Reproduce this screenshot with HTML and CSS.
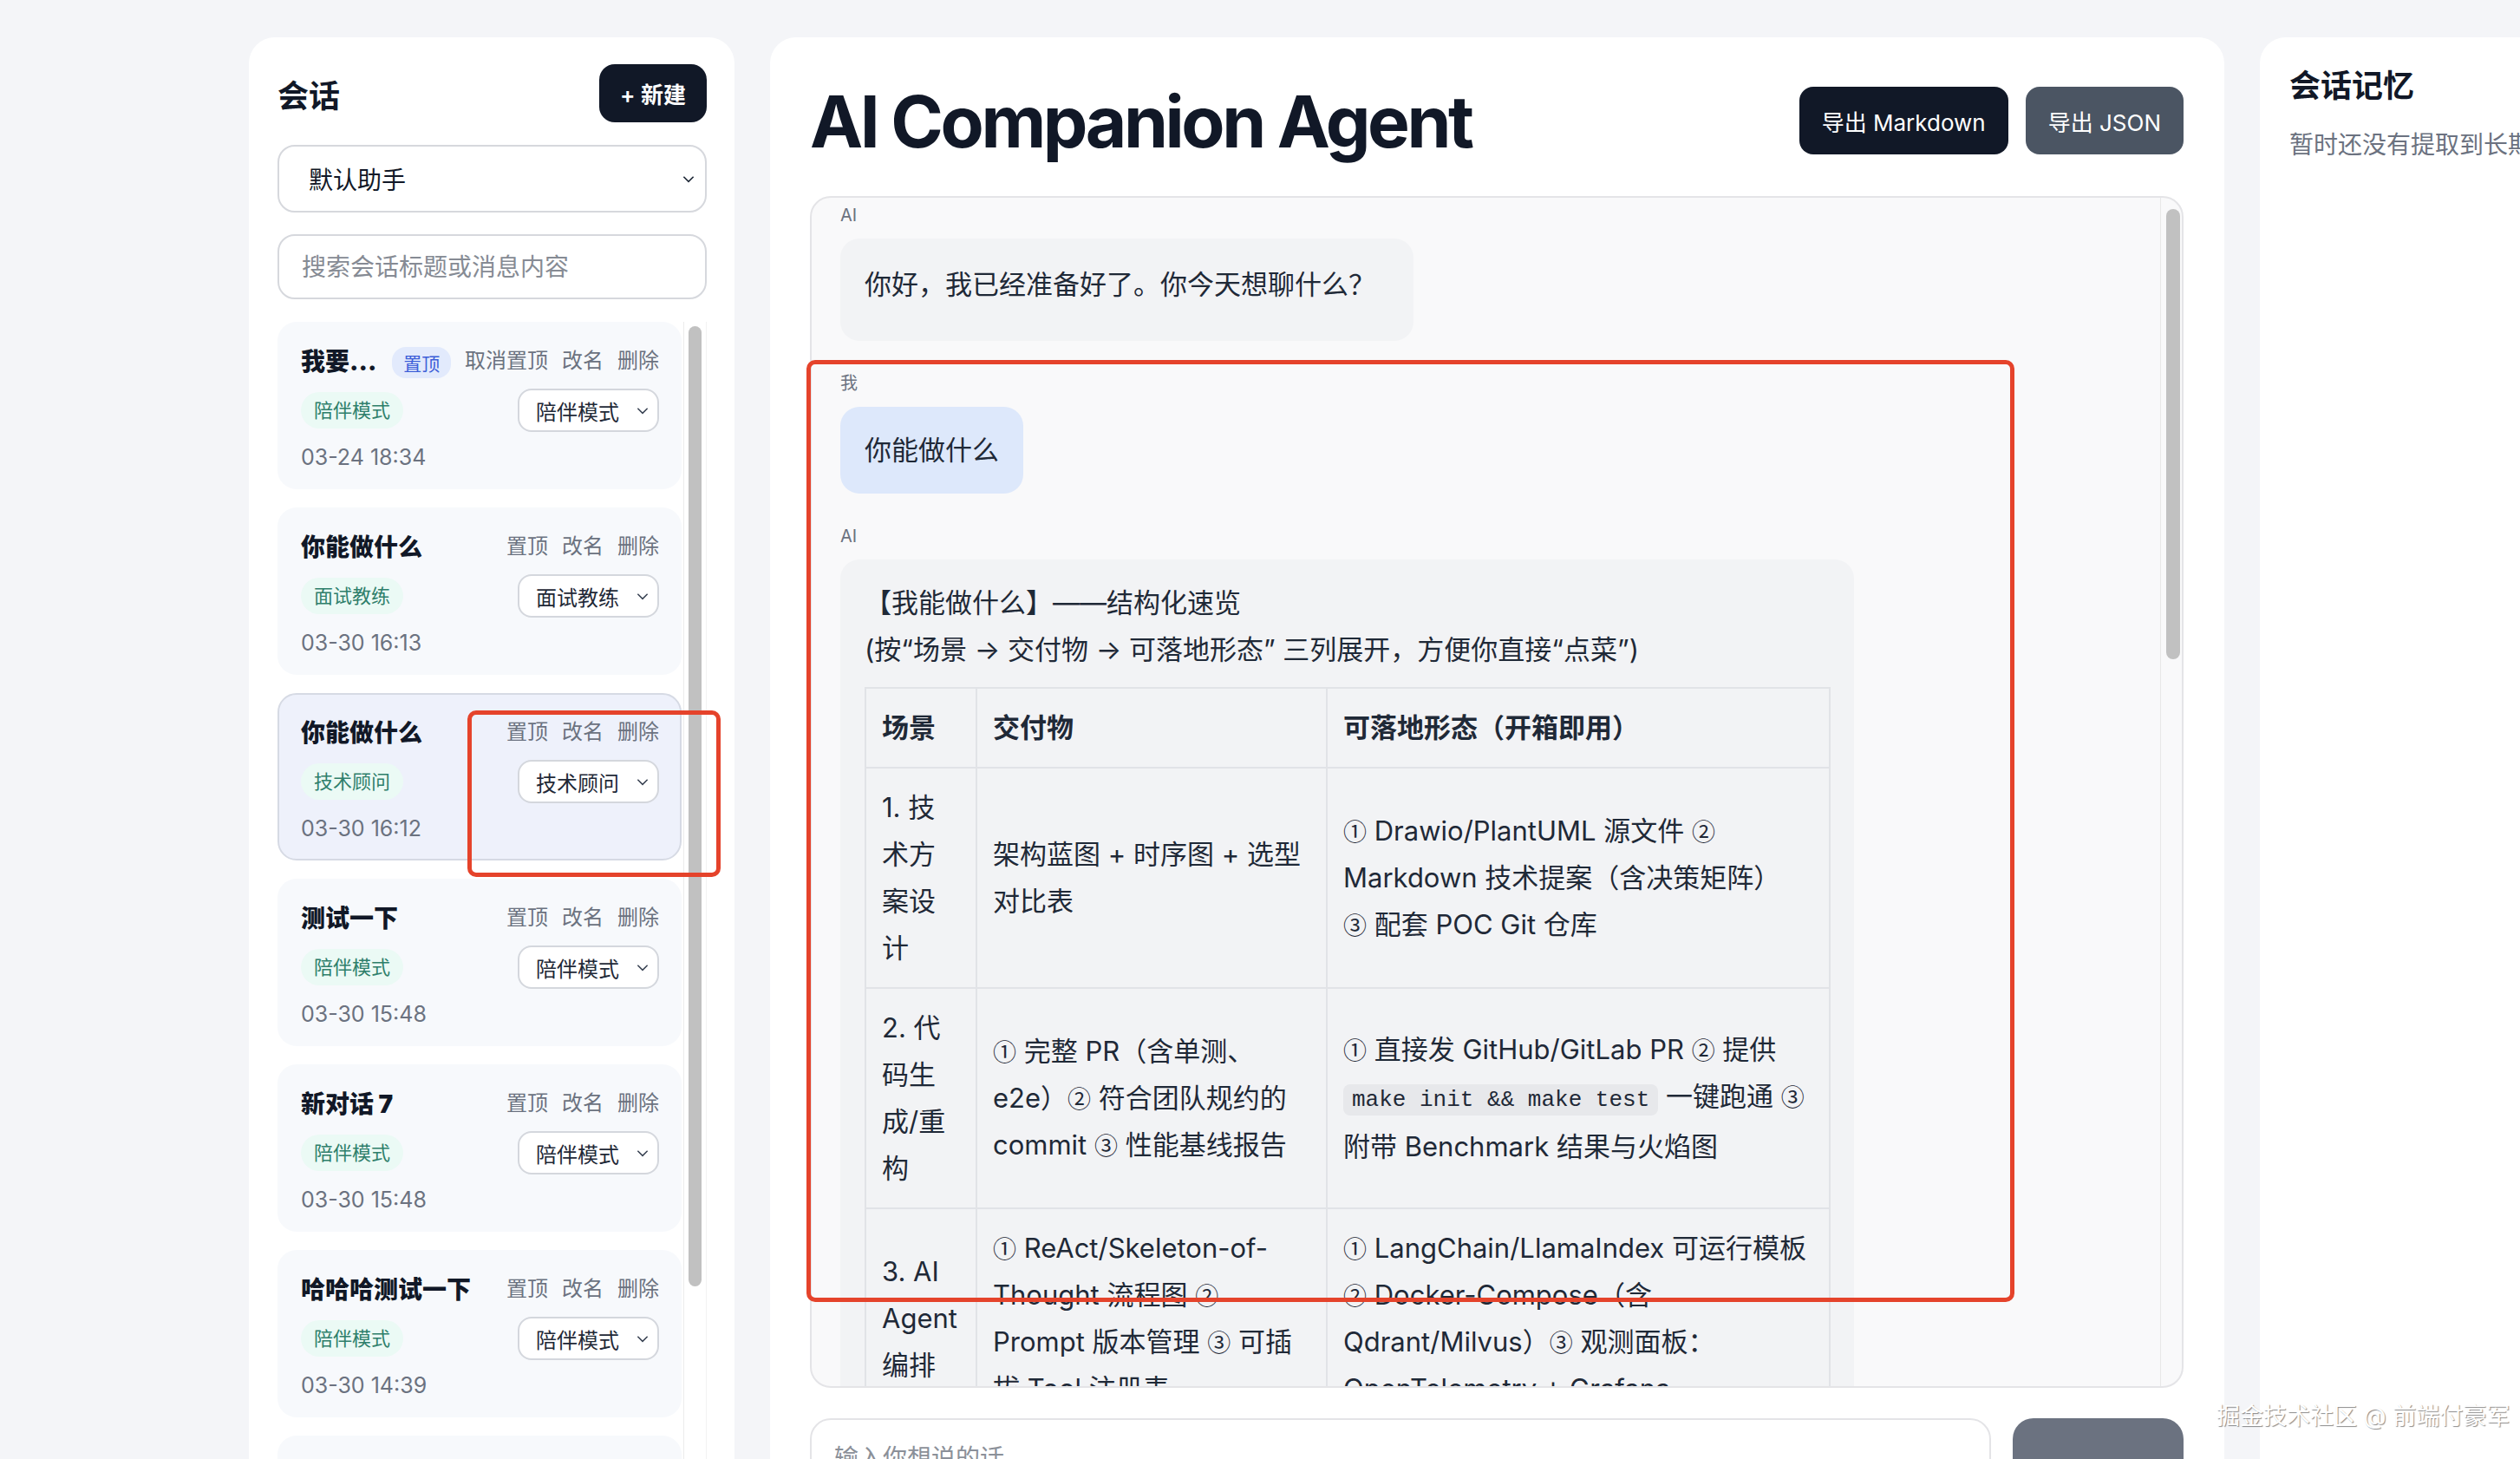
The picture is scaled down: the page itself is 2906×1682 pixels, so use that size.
FILE: index.html
```html
<!doctype html>
<html lang="zh-CN">
<head>
<meta charset="utf-8">
<title>AI Companion Agent</title>
<link rel="stylesheet" href="styles.css">
</head>
<body>
<div class="app">
  <aside class="panel sessions">
    <div class="sessions-head">
      <h2>会话</h2>
      <button class="btn-new">+ 新建</button>
    </div>
    <div class="field field-select">
      <span>默认助手</span>
      <svg class="chev" viewBox="0 0 16 16" width="18" height="18"><path d="M3 6l5 5 5-5" fill="none" stroke="#1f2937" stroke-width="1.5"/></svg>
    </div>
    <input class="search" placeholder="搜索会话标题或消息内容">
    <div class="session-scroll">
      <div class="session-list">
        <div class="session">
          <div class="session-top">
            <div class="session-title"><strong>我要...</strong><span class="pin">置顶</span></div>
            <div class="session-actions"><span>取消置顶</span><span>改名</span><span>删除</span></div>
          </div>
          <div class="session-mid">
            <span class="mode-tag">陪伴模式</span>
            <div class="mode-select"><span>陪伴模式</span><svg viewBox="0 0 16 16" width="18" height="18"><path d="M3 6l5 5 5-5" fill="none" stroke="#374151" stroke-width="1.3"/></svg></div>
          </div>
          <div class="session-time">03-24 18:34</div>
        </div>
        <div class="session">
          <div class="session-top">
            <div class="session-title"><strong>你能做什么</strong></div>
            <div class="session-actions"><span>置顶</span><span>改名</span><span>删除</span></div>
          </div>
          <div class="session-mid">
            <span class="mode-tag">面试教练</span>
            <div class="mode-select"><span>面试教练</span><svg viewBox="0 0 16 16" width="18" height="18"><path d="M3 6l5 5 5-5" fill="none" stroke="#374151" stroke-width="1.3"/></svg></div>
          </div>
          <div class="session-time">03-30 16:13</div>
        </div>
        <div class="session active">
          <div class="session-top">
            <div class="session-title"><strong>你能做什么</strong></div>
            <div class="session-actions"><span>置顶</span><span>改名</span><span>删除</span></div>
          </div>
          <div class="session-mid">
            <span class="mode-tag">技术顾问</span>
            <div class="mode-select"><span>技术顾问</span><svg viewBox="0 0 16 16" width="18" height="18"><path d="M3 6l5 5 5-5" fill="none" stroke="#374151" stroke-width="1.3"/></svg></div>
          </div>
          <div class="session-time">03-30 16:12</div>
        </div>
        <div class="session">
          <div class="session-top">
            <div class="session-title"><strong>测试一下</strong></div>
            <div class="session-actions"><span>置顶</span><span>改名</span><span>删除</span></div>
          </div>
          <div class="session-mid">
            <span class="mode-tag">陪伴模式</span>
            <div class="mode-select"><span>陪伴模式</span><svg viewBox="0 0 16 16" width="18" height="18"><path d="M3 6l5 5 5-5" fill="none" stroke="#374151" stroke-width="1.3"/></svg></div>
          </div>
          <div class="session-time">03-30 15:48</div>
        </div>
        <div class="session">
          <div class="session-top">
            <div class="session-title"><strong>新对话 7</strong></div>
            <div class="session-actions"><span>置顶</span><span>改名</span><span>删除</span></div>
          </div>
          <div class="session-mid">
            <span class="mode-tag">陪伴模式</span>
            <div class="mode-select"><span>陪伴模式</span><svg viewBox="0 0 16 16" width="18" height="18"><path d="M3 6l5 5 5-5" fill="none" stroke="#374151" stroke-width="1.3"/></svg></div>
          </div>
          <div class="session-time">03-30 15:48</div>
        </div>
        <div class="session">
          <div class="session-top">
            <div class="session-title"><strong>哈哈哈测试一下</strong></div>
            <div class="session-actions"><span>置顶</span><span>改名</span><span>删除</span></div>
          </div>
          <div class="session-mid">
            <span class="mode-tag">陪伴模式</span>
            <div class="mode-select"><span>陪伴模式</span><svg viewBox="0 0 16 16" width="18" height="18"><path d="M3 6l5 5 5-5" fill="none" stroke="#374151" stroke-width="1.3"/></svg></div>
          </div>
          <div class="session-time">03-30 14:39</div>
        </div>
        <div class="session">
          <div class="session-top">
            <div class="session-title"><strong>新对话 6</strong></div>
            <div class="session-actions"><span>置顶</span><span>改名</span><span>删除</span></div>
          </div>
        </div>
      </div>
      <div class="scroll-track"><div class="scroll-thumb"></div></div>
    </div>
  </aside>

  <main class="panel chat">
    <header class="chat-head">
      <h1>AI Companion Agent</h1>
      <div class="head-actions">
        <button class="btn btn-dark">导出 Markdown</button>
        <button class="btn btn-gray">导出 JSON</button>
      </div>
    </header>

    <div class="chat-box">
      <div class="messages">
        <div class="msg">
          <div class="role">AI</div>
          <div class="bubble hello">你好，我已经准备好了。你今天想聊什么？</div>
        </div>
        <div class="msg">
          <div class="role">我</div>
          <div class="bubble user">你能做什么</div>
        </div>
        <div class="msg">
          <div class="role">AI</div>
          <div class="bubble wide">
            <p>【我能做什么】——结构化速览<br>(按“场景 → 交付物 → 可落地形态” 三列展开，方便你直接“点菜”)</p>
            <table class="md-table">
              <colgroup><col class="c1"><col class="c2"><col class="c3"></colgroup>
              <thead>
                <tr><th>场景</th><th>交付物</th><th>可落地形态（开箱即用）</th></tr>
              </thead>
              <tbody>
                <tr>
                  <td>1. 技术方案设计</td>
                  <td>架构蓝图 + 时序图 + 选型对比表</td>
                  <td><span class="n">①</span> Drawio/PlantUML 源文件 <span class="n">②</span> Markdown 技术提案（含决策矩阵）<br><span class="n">③</span> 配套 POC Git 仓库</td>
                </tr>
                <tr>
                  <td>2. 代码生成/重构</td>
                  <td><span class="n">①</span> 完整 PR（含单测、e2e）<span class="n">②</span> 符合团队规约的 commit <span class="n">③</span> 性能基线报告</td>
                  <td><span class="n">①</span> 直接发 GitHub/GitLab PR <span class="n">②</span> 提供 <code>make init &amp;&amp; make test</code> 一键跑通 <span class="n">③</span> 附带 Benchmark 结果与火焰图</td>
                </tr>
                <tr>
                  <td>3. AI Agent 编排</td>
                  <td><span class="n">①</span> ReAct/Skeleton-of-Thought 流程图 <span class="n">②</span> Prompt 版本管理 <span class="n">③</span> 可插拔 Tool 注册表</td>
                  <td><span class="n">①</span> LangChain/LlamaIndex 可运行模板 <span class="n">②</span> Docker-Compose（含 Qdrant/Milvus）<span class="n">③</span> 观测面板：OpenTelemetry + Grafana</td>
                </tr>
              </tbody>
            </table>
          </div>
        </div>
      </div>
      <div class="chat-track"><div class="chat-thumb"></div></div>
    </div>

    <div class="composer">
      <textarea class="composer-input" placeholder="输入你想说的话"></textarea>
      <button class="send">发送</button>
    </div>
  </main>

  <aside class="panel memory">
    <h2>会话记忆</h2>
    <p>暂时还没有提取到长期记忆。</p>
  </aside>
</div>

<div class="mark mark-list"></div>
<div class="mark mark-chat"></div>
<div class="watermark">掘金技术社区 @ 前端付豪军</div>
</body>
</html>
```

FILE: styles.css
```css
html, body {
  margin: 0;
  height: 1682px;
  overflow: hidden;
}
body {
  position: relative;
  background: #f4f5f8;
  color: #111827;
  font-family: "Inter", "Noto Sans CJK SC", sans-serif;
}
button, input, textarea { font-family: inherit; }

.app {
  display: grid;
  grid-template-columns: 560px 1677px 620px;
  column-gap: 41px;
  padding: 43px 0 0 287px;
}
.panel {
  background: #fff;
  border-radius: 30px;
  height: 1780px;
  box-sizing: border-box;
}

/* left: sessions */
.sessions {
  padding: 31px 32px 0 33px;
  display: flex;
  flex-direction: column;
}
.sessions-head {
  display: flex;
  justify-content: space-between;
  align-items: center;
}
.sessions-head h2 {
  margin: 0;
  font-size: 36px;
  font-weight: 700;
}
.btn-new {
  height: 67px;
  padding: 0 24px;
  border: 0;
  border-radius: 18px;
  background: #111827;
  color: #fff;
  font-size: 26px;
  font-weight: 600;
}
.field {
  margin-top: 26px;
  height: 78px;
  box-sizing: border-box;
  border: 2px solid #d6d8dd;
  border-radius: 20px;
  display: flex;
  align-items: center;
  justify-content: space-between;
  padding: 0 10px 0 34px;
  font-size: 28px;
}
.search {
  margin-top: 25px;
  height: 75px;
  box-sizing: border-box;
  border: 2px solid #d6d8dd;
  border-radius: 20px;
  padding: 0 26px;
  font-size: 28px;
  outline: none;
}
.search::placeholder { color: #868b94; }

.session-scroll {
  margin-top: 26px;
  display: flex;
  gap: 2px;
}
.session-list {
  width: 466px;
  display: flex;
  flex-direction: column;
  gap: 21px;
}
.session {
  border: 2px solid transparent;
  border-radius: 22px;
  background: #f7f9fc;
  padding: 26px 24px 22px 25px;
}
.session.active {
  background: #eef1fb;
  border-color: #d6dae4;
}
.session-top {
  display: flex;
  justify-content: space-between;
  align-items: center;
  height: 32px;
}
.session-title {
  display: flex;
  align-items: center;
  gap: 18px;
  font-size: 28px;
  font-weight: 700;
  white-space: nowrap;
}
.pin {
  font-size: 21px;
  font-weight: 400;
  color: #3d5fd8;
  background: #e2eafc;
  border-radius: 16px;
  padding: 3px 13px;
  margin-top: 6px;
}
.session-actions {
  display: flex;
  gap: 16px;
  font-size: 24px;
  color: #6b7280;
  margin-top: -4px;
}
.session-mid {
  display: flex;
  justify-content: space-between;
  align-items: center;
  margin-top: 17px;
  height: 50px;
}
.mode-tag {
  font-size: 22px;
  color: #2f7f6b;
  background: #ebfaf5;
  border-radius: 21px;
  padding: 0 15px;
  line-height: 42px;
}
.mode-select {
  width: 163px;
  height: 50px;
  box-sizing: border-box;
  border: 2px solid #d4d7dd;
  border-radius: 16px;
  background: #fff;
  display: flex;
  align-items: center;
  justify-content: space-between;
  padding: 0 8px 0 19px;
  font-size: 24px;
  color: #1f2937;
}
.session-time {
  margin-top: 16px;
  font-size: 25px;
  line-height: 26px;
  color: #6b7280;
}
.scroll-track {
  width: 27px;
  box-sizing: border-box;
  border-left: 1px solid #ececec;
  border-right: 1px solid #f2f2f2;
  padding: 5px 0 0 5px;
}
.scroll-thumb {
  width: 15px;
  height: 1107px;
  border-radius: 8px;
  background: #c1c1c1;
}

/* middle: chat */
.chat {
  padding: 57px 47px 0 46px;
  display: flex;
  flex-direction: column;
}
.chat-head {
  display: flex;
  justify-content: space-between;
  align-items: center;
  height: 78px;
}
.chat-head h1 {
  margin: 4px 0 0;
  font-size: 82px;
  line-height: 1;
  font-weight: 700;
  letter-spacing: -0.042em;
}
.head-actions {
  display: flex;
  gap: 20px;
}
.btn {
  height: 78px;
  padding: 0 26px;
  border: 0;
  border-radius: 16px;
  color: #fff;
  font-size: 26px;
}
.btn-dark { background: #111827; }
.btn-gray { background: #4b5563; }

.chat-box {
  margin-top: 48px;
  height: 1374px;
  box-sizing: border-box;
  border: 2px solid #e4e4e7;
  border-radius: 24px;
  background: #f9f9fa;
  display: flex;
  overflow: hidden;
}
.messages {
  flex: 1;
  padding: 7px 0 0 33px;
  overflow: hidden;
}
.msg + .msg { margin-top: 36px; }
.role {
  font-size: 20px;
  line-height: 26px;
  color: #6b7280;
  margin-bottom: 14px;
}
.bubble {
  width: fit-content;
  max-width: 1169px;
  box-sizing: border-box;
  border-radius: 22px;
  padding: 23px 28px;
  font-size: 31px;
  line-height: 54px;
  background: #f2f3f5;
  color: #1f2937;
}
.bubble.hello { padding: 26px 44px 38px 28px; }
.bubble.user { background: #dde8fb; }
.bubble.wide {
  width: 1169px;
  padding: 23px 27px 27px 28px;
}
.bubble p { margin: 0; }

.md-table {
  margin-top: 16px;
  width: 100%;
  table-layout: fixed;
  border-collapse: collapse;
}
.md-table col.c1 { width: 128px; }
.md-table col.c2 { width: 404px; }
.md-table th,
.md-table td {
  border: 2px solid #e1e3e7;
  padding: 18px;
  text-align: left;
  vertical-align: middle;
  font-weight: 400;
}
.md-table th { font-weight: 700; }
.md-table th:first-child,
.md-table td:first-child { padding-right: 22px; }
.md-table th:last-child,
.md-table td:last-child { padding-right: 10px; }
.md-table .n {
  font-family: "Noto Sans CJK SC", sans-serif;
  font-size: 27px;
  line-height: 1;
}
.md-table code {
  font-family: "Liberation Mono", monospace;
  font-size: 26px;
  background: #e7e8eb;
  border-radius: 8px;
  padding: 3px 10px;
}

.chat-track {
  width: 25px;
  box-sizing: border-box;
  border-left: 1px solid #e8e8e8;
  padding: 13px 0 0 6px;
}
.chat-thumb {
  width: 16px;
  height: 519px;
  border-radius: 8px;
  background: #c1c1c1;
}

.composer {
  margin-top: 35px;
  display: flex;
  gap: 25px;
}
.composer-input {
  flex: 1;
  height: 140px;
  box-sizing: border-box;
  border: 2px solid #e4e4e7;
  border-radius: 24px;
  padding: 22px 26px;
  font-size: 28px;
  resize: none;
  outline: none;
}
.composer-input::placeholder { color: #8b9099; }
.send {
  width: 197px;
  height: 140px;
  border: 0;
  border-radius: 24px;
  background: #6b7280;
  color: #fff;
  font-size: 26px;
}

/* right: memory */
.memory {
  padding: 34px;
  white-space: nowrap;
}
.memory h2 {
  margin: 0;
  font-size: 36px;
  line-height: 44px;
  font-weight: 700;
}
.memory p {
  margin: 26px 0 0;
  font-size: 28px;
  line-height: 40px;
  color: #6b7280;
}

/* screenshot annotations */
.mark {
  position: absolute;
  box-sizing: border-box;
  border: 5px solid #e5432b;
  border-radius: 10px;
}
.mark-list { left: 539px; top: 819px; width: 292px; height: 192px; }
.mark-chat { left: 930px; top: 415px; width: 1393px; height: 1086px; }

.watermark {
  position: absolute;
  left: 2556px;
  top: 1611px;
  font-size: 27px;
  color: #fff;
  text-shadow: 1px 1px 1px rgba(0, 0, 0, 0.45);
}
```
